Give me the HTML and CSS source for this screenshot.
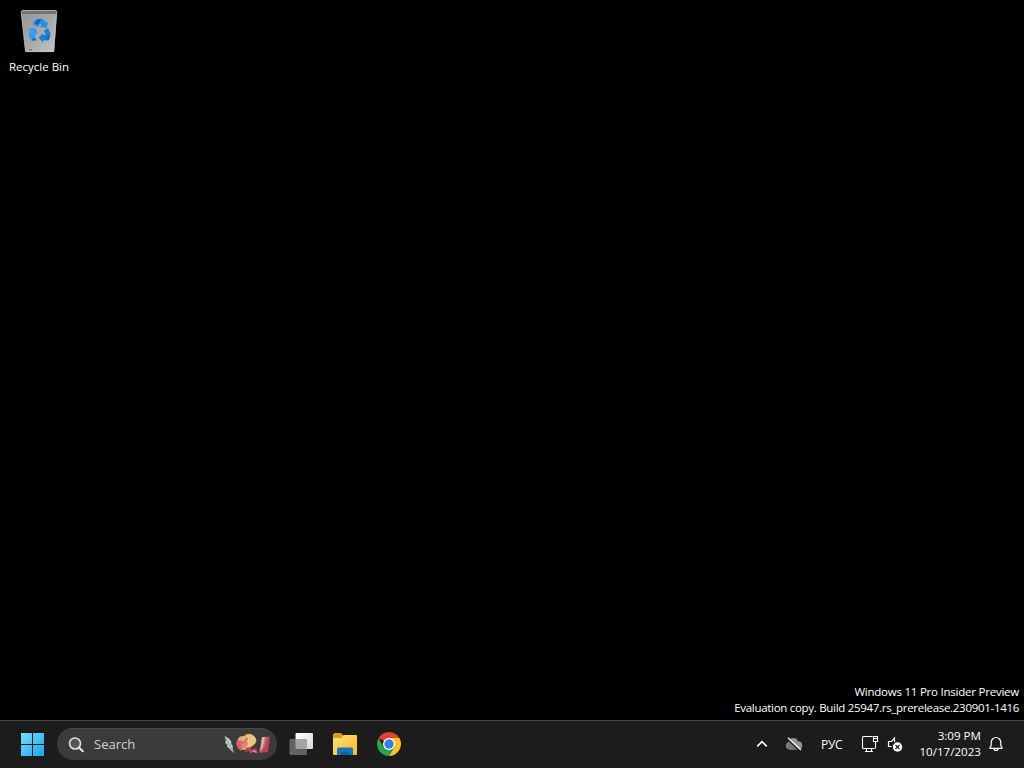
FILE: index.html
```html
<!DOCTYPE html>
<html lang="en">
<head>
<meta charset="utf-8">
<title>Desktop</title>
<link rel="stylesheet" href="styles.css">
</head>
<body>
<div class="screen">
  <main class="desktop">
    <div class="shortcut">
      <svg class="bin" width="38" height="44" viewBox="0 0 38 44">
        <defs>
          <linearGradient id="bin" x1="0" y1="0" x2="1" y2="1"><stop offset="0" stop-color="#929699"/><stop offset=".55" stop-color="#a9acae"/><stop offset="1" stop-color="#c4c5c6"/></linearGradient>
        </defs>
        <path d="M1 3 L37 3 L34 43 L5.500 43Z" fill="url(#bin)"/>
        <path d="M1 3 Q1 1.500 3 1.500 H35 Q37 1.500 37 3 L36 5 H2Z" fill="#77736e"/>
        <path d="M1.200 3.500 Q1 1.500 3 1.500 H35 Q37 1.500 36.800 3.500" fill="none" stroke="#c8c8c8" stroke-width=".8"/>
        <path d="M1.300 4 L5.500 42.600 H33.700 L36.700 4" fill="none" stroke="#c5c5c5" stroke-width=".7"/>
        <path d="M9 40h3v1.500H9z" fill="#77797b"/>
        <path d="M12.500 15l3-4q1-1 2.500-1h4q2 0 3 2l1.200 1.500 2-.8-1.500 6.300-7-1.200 2-1.500-2-2-1.800 4-5.400-3.300z" fill="#2492e4"/>
        <path d="M8.500 19.500l7-.5 2.500 6-2-.5-1 3 1.500 4h-4q-1.500 0-2.300-2L8.500 26l1-4z" fill="#3b9eea"/>
        <path d="M28 19l2.200 5q.8 2-.2 4l-1.500 3.500H23v2l-4.500-4.700 4.500-4.800v2h2.500L24 21.500z" fill="#1c80d6"/>
        <path d="M17.500 10h4l-3 6-4-2zM11.500 31.500l2.500-3.500 2.500 3.500zM25 27.500h5.200L28 31.500z" fill="#0f6cbd"/>
      </svg>
      <span class="shortcut-name">Recycle Bin</span>
    </div>
    <div class="watermark">
      <span class="edition">Windows 11 Pro Insider Preview</span>
      <span class="build">Evaluation copy. Build 25947.rs_prerelease.230901-1416</span>
    </div>
  </main>
  <footer class="taskbar">
    <svg class="start" width="24" height="24" viewBox="0 0 24 24">
      <defs><linearGradient id="win" gradientUnits="userSpaceOnUse" x1="0" y1="0" x2="24" y2="24"><stop stop-color="#7ce0fb"/><stop offset="1" stop-color="#16a5ee"/></linearGradient></defs>
      <path d="M1 1h11v11H1zM13 1h11v11H13zM1 13h11v11H1zM13 13h11v11H13z" fill="url(#win)"/>
    </svg>
    <div class="search">
      <svg width="18" height="18" viewBox="0 0 18 18"><circle cx="8" cy="7.500" r="5.500" fill="#555" stroke="#e2e2e2" stroke-width="1.600"/><path d="M12.200 11.700L15.800 15.300" stroke="#e8e8e8" stroke-width="2" stroke-linecap="round"/></svg>
      <span class="search-label">Search</span>
      <svg class="highlight" width="48" height="24" viewBox="0 0 48 24">
        <path d="M1.500 3L6 5.500 8.500 9 8 11 10 13 9.500 15 11 20 7.500 17 6 15 4 14 4.500 12 2 9.500 3 8Z" fill="#c5cdca"/>
        <path d="M3 5L10 19" fill="none" stroke="#7b8583" stroke-width=".7"/>
        <path d="M14 9Q15 2 21 3Q24-.5 29 1.500Q36 6 32 11L27 15Q20 19 15 15Z" fill="#dfaf68"/>
        <path d="M22 5Q26 0 30 2.500Q35 6 31 11L25 15Z" fill="#ecc384"/>
        <path d="M14 8l4-1 3-3 4 1-2 5-3 4-2 4-3-3-2-4z" fill="#d96368"/>
        <path d="M16 6l5-3 3 2-4 4z" fill="#e3b077"/>
        <path d="M18 11l6-3 1 3-5 5z" fill="#e18477"/>
        <path d="M23 15l4-1 2 3 4-2 2 5-5-1-2 2-2-3-4 1z" fill="#b64359"/>
        <path d="M29 17l4 1 1 2-4-1z" fill="#ed8290"/>
        <path d="M39 4L47 3.500 45 19 36 20Z" fill="#b64653"/>
        <path d="M39 4h5l-3 10-4 5z" fill="#dcb2af"/>
        <path d="M42 4h2l-2 8-3 5z" fill="#c66d75"/>
      </svg>
    </div>
    <div class="apps">
      <svg width="24" height="24" viewBox="0 0 24 24">
        <defs><linearGradient id="pane" x1="0" y1="0" x2="1" y2="1"><stop stop-color="#fff"/><stop offset="1" stop-color="#d5d5d5"/></linearGradient></defs>
        <rect x="6.500" y="1" width="17.500" height="16" rx="1" fill="url(#pane)"/>
        <rect x="0.500" y="7" width="17.500" height="16" rx="1" fill="#626262"/>
        <path d="M6.500 7H18v10H7.500q-1 0-1-1z" fill="#a3a3a3"/>
      </svg>
      <svg width="24" height="24" viewBox="0 0 24 24">
        <defs><linearGradient id="folder" x1="0" y1="0" x2="1" y2="1"><stop stop-color="#ffe078"/><stop offset="1" stop-color="#f7bd26"/></linearGradient></defs>
        <path d="M0 3q0-2 2-2h6l3 3v4H0z" fill="#d99c18"/>
        <path d="M0 6h8l3-3h12q1 0 1 1v18q0 1-1 1H1q-1 0-1-1z" fill="url(#folder)"/>
        <path d="M4 23v-6q0-1.500 1.500-1.500h13q1.500 0 1.500 1.500v6z" fill="#1476bf"/>
        <path d="M8 23v-2q0-1 1-1h6q1 0 1 1v2z" fill="#0f64a8"/>
      </svg>
      <svg width="24" height="24" viewBox="0 0 24 24">
        <path d="M12 12L1.610 6A12 12 0 0 1 22.390 6Z" fill="#e4412f"/>
        <path d="M12 12V6H22.390A12 12 0 0 1 12 24L17.200 15Z" fill="#fcc41f"/>
        <path d="M1.610 6A12 12 0 0 0 12 24L17.200 15 12 12 6.800 15Z" fill="#2aa34b"/>
        <circle cx="12" cy="12" r="6" fill="#fff"/><circle cx="12" cy="12" r="4.700" fill="#327de6"/>
      </svg>
    </div>
    <div class="tray">
      <svg class="chevron" width="12" height="8" viewBox="0 0 12 8"><path d="M1.200 6.300L6 1.700 10.800 6.300" fill="none" stroke="#fff" stroke-width="1.600"/></svg>
      <svg class="cloud" width="18" height="16" viewBox="0 0 18 16">
        <path d="M4.500 13.500A3.900 3.900 0 0 1 3.500 6 5 5 0 0 1 13 5.200 4.200 4.200 0 0 1 14 13.500Z" fill="#919191"/>
        <path d="M3.500 6q3.500-1 5.500 2l5.500 5.500H5q-4-1-4-4z" fill="#777"/>
        <path d="M2 2.700L14.500 14.700" stroke="#1c1c1c" stroke-width="1.400"/><path d="M3 1.700L16 14" stroke="#f2f2f2" stroke-width="1.300"/>
      </svg>
      <span class="language">РУС</span>
      <div class="status">
        <svg width="18" height="18" viewBox="0 0 18 18" fill="none" stroke="#fff" stroke-width="1.100">
          <path d="M11.500 1.500H2.500q-1 0-1 1v10q0 1 1 1h11M5.500 13.500v3M10.500 13.500v3M4 16.500h8"/>
          <path d="M12.500 1.500h4v5h-4zM14.500 6.500v7M12.500 3.500h4"/>
        </svg>
        <svg width="18" height="18" viewBox="0 0 18 18" fill="none" stroke="#fff" stroke-width="1.200">
          <path d="M7.500 7V3L4.500 6.500H1.500v5h3"/>
          <circle cx="10.500" cy="12" r="4.700" fill="#fff" stroke="none"/>
          <path d="M8.500 10l4 4M12.500 10l-4 4" stroke="#222"/>
        </svg>
      </div>
      <div class="clock"><span class="time">3:09 PM</span><span class="date">10/17/2023</span></div>
      <svg class="bell" width="16" height="16" viewBox="0 0 16 16" fill="none" stroke="#fff" stroke-width="1.200" stroke-linejoin="round"><path d="M3.200 6.500A4.800 5 0 0 1 12.800 6.500V9.500L14.200 12.300H1.800L3.200 9.500ZM6 12.500a2 2 0 0 0 4 0"/></svg>
    </div>
  </footer>
</div>
</body>
</html>
```

FILE: styles.css
```css
* { box-sizing: border-box; }
body { margin: 0; background: #000; color: #fff; font-family: "Open Sans", "Noto Sans", sans-serif; font-size: 12px; }
svg { display: block; flex: none; }
span { white-space: nowrap; }
.screen { display: flex; flex-direction: column; width: 1024px; height: 768px; overflow: hidden; }
.desktop { flex: 1; display: flex; flex-direction: column; justify-content: space-between; }
.shortcut { width: 78px; padding-top: 9px; display: flex; flex-direction: column; align-items: center; gap: 6px; }
.shortcut-name { line-height: 16px; font-size: 11.500px; }
.watermark { align-self: flex-end; display: flex; flex-direction: column; align-items: flex-end; line-height: 16px; padding: 0 5px 4px 0; font-size: 11.500px; }
.edition { letter-spacing: -0.230px; }
.build { letter-spacing: -0.300px; }
.taskbar { height: 48px; display: flex; align-items: center; background: #1c1c1c; border-top: 1px solid #454545; padding: 0 0 1px 20px; }
.search { width: 220px; height: 32px; margin-left: 13px; padding: 0 6px 0 10px; display: flex; align-items: center; border-radius: 16px; background: #3b3b3b; border-top: 1px solid #484848; }
.search-label { margin-left: 9px; font-size: 13px; line-height: 17px; color: #d2d2d2; }
.highlight { margin-left: auto; }
.apps { display: flex; gap: 20px; margin-left: 12px; }
.tray { flex: 1; display: flex; align-items: center; justify-content: flex-end; padding-right: 20px; }
.cloud { margin-left: 17px; }
.language { margin-left: 18px; width: 23px; padding-top: 2px; font-size: 12px; line-height: 16px; letter-spacing: -0.300px; }
.status { margin-left: 17px; display: flex; gap: 8px; }
.clock { margin-left: 14px; width: 62px; display: flex; flex-direction: column; align-items: flex-end; line-height: 16px; font-size: 11.600px; }
.bell { margin-left: 7px; }
```
